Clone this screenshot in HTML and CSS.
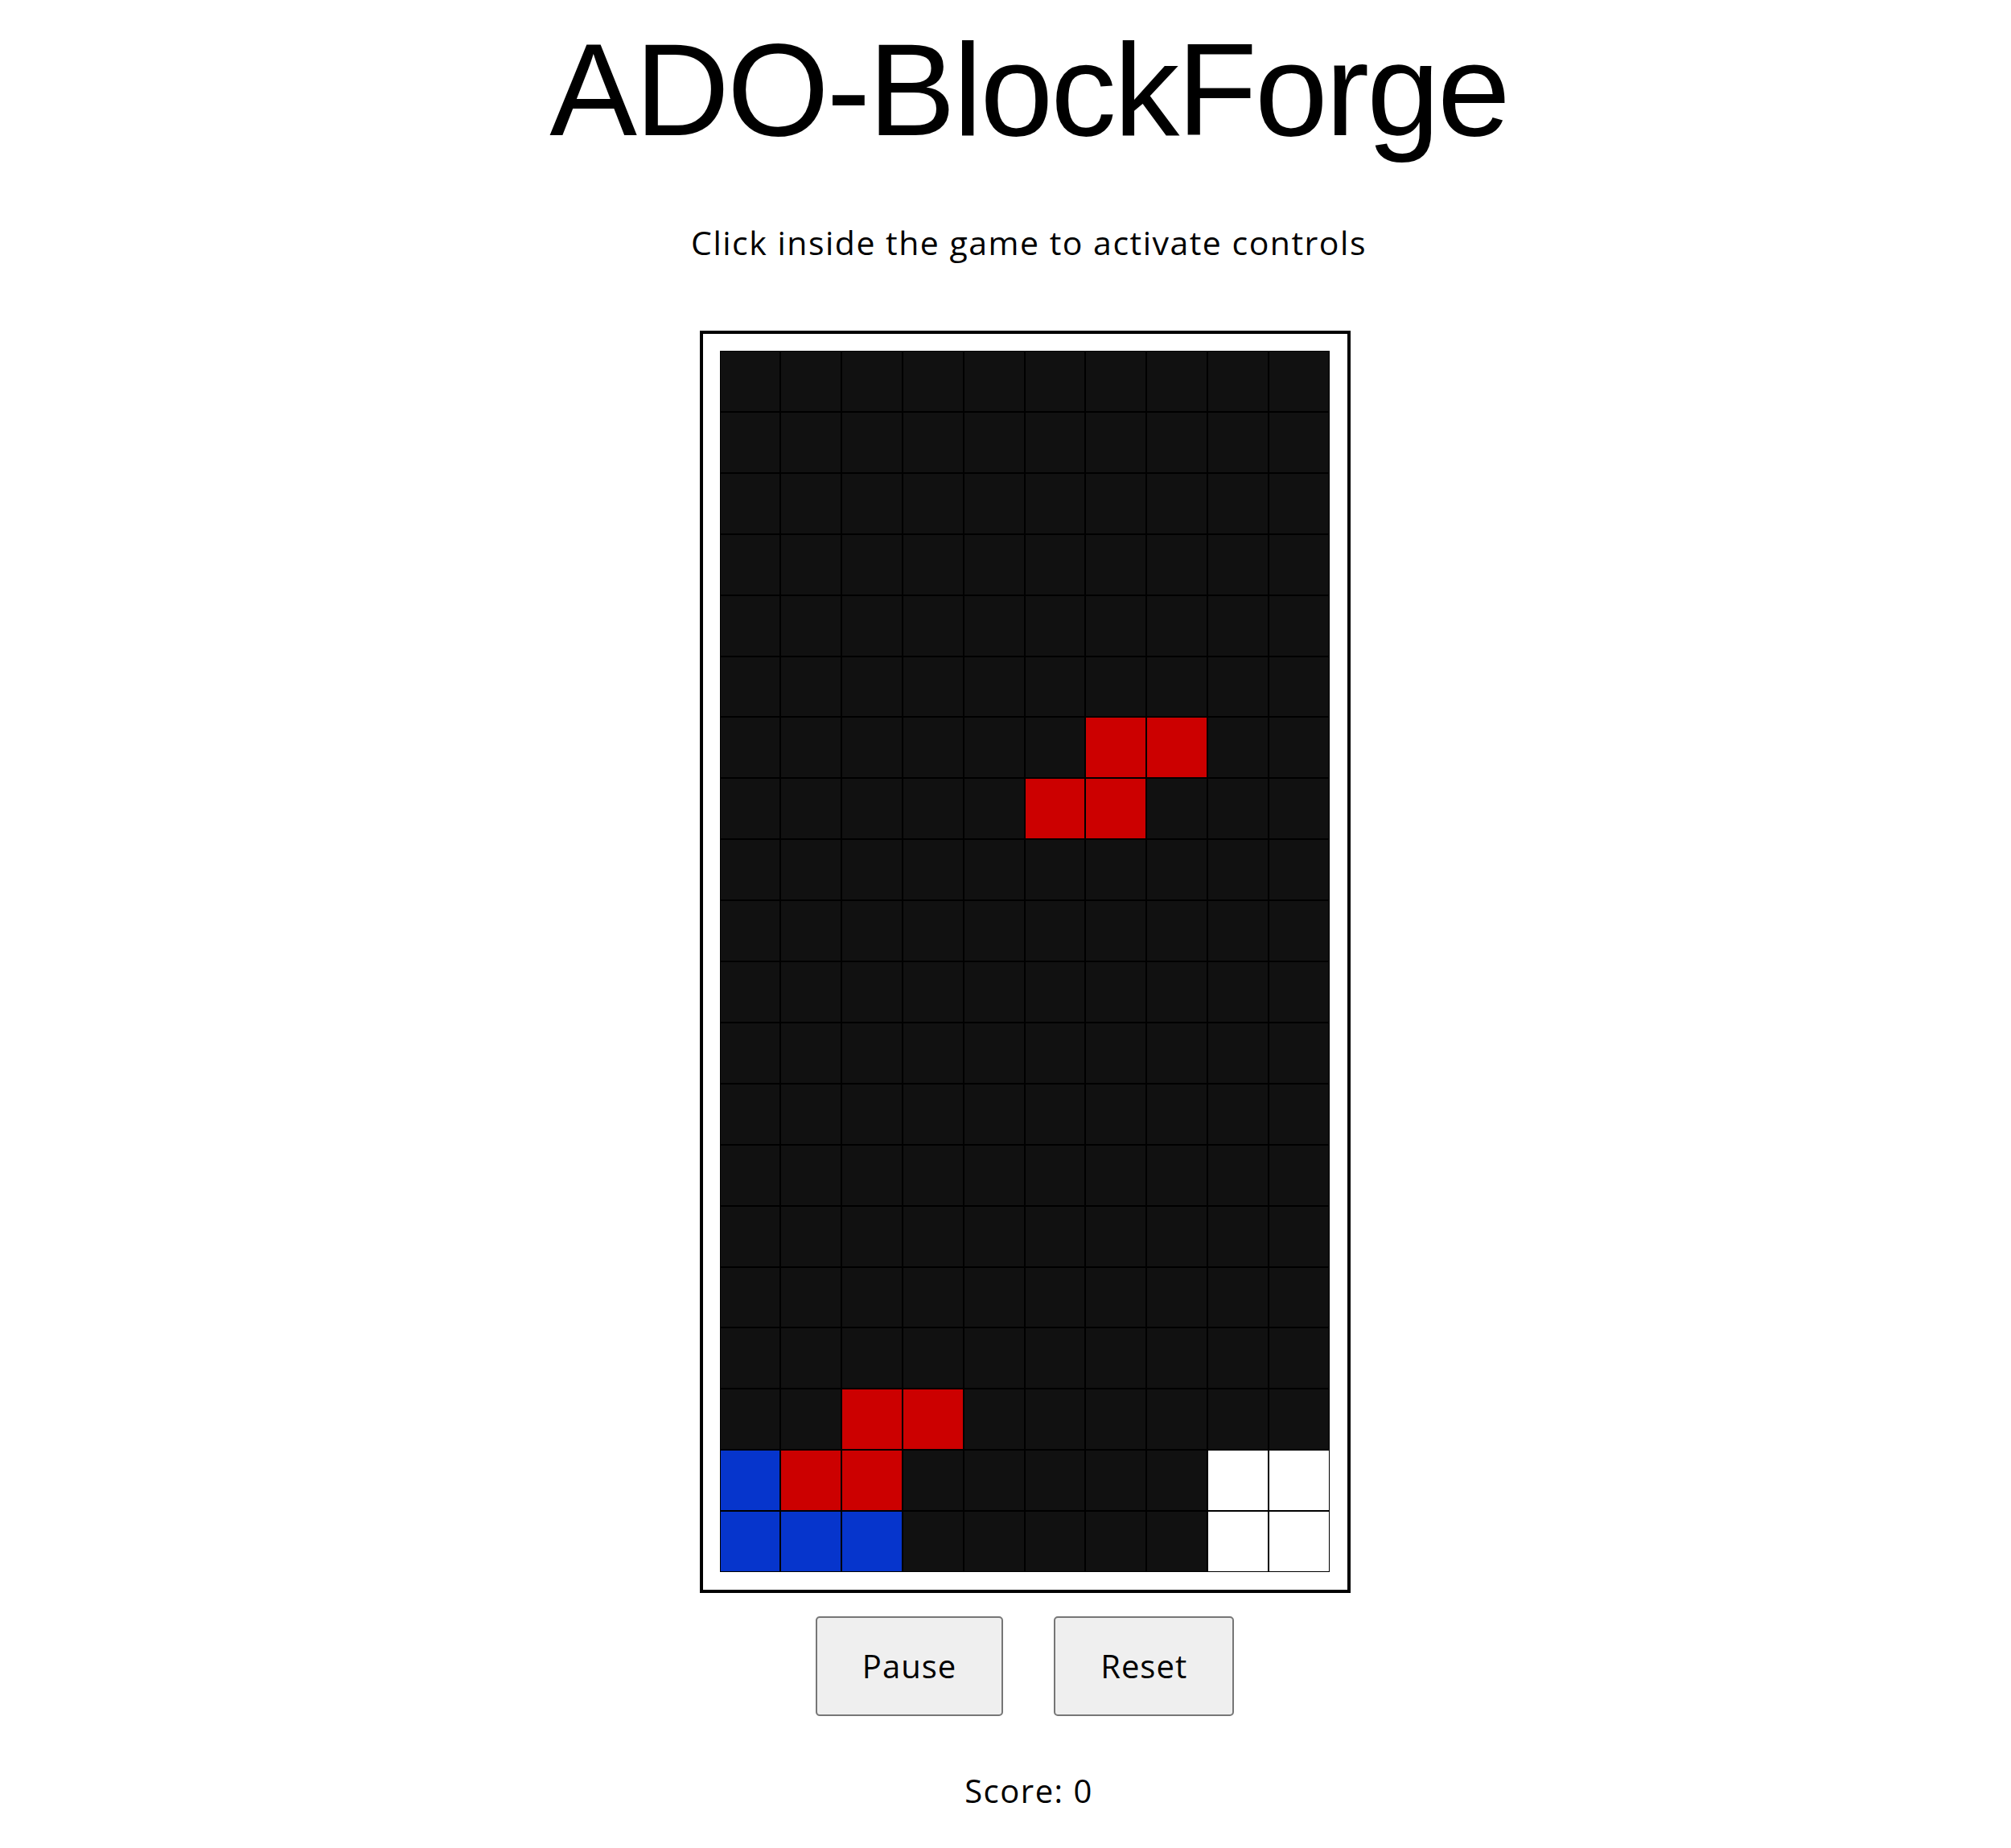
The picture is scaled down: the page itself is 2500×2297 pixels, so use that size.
FILE: index.html
```html
<!DOCTYPE html>
<html lang="en">
<head>
<meta charset="utf-8">
<title>ADO-BlockForge</title>
<link rel="stylesheet" href="styles.css">
</head>
<body>
<main class="page">
  <h1 class="title">ADO-BlockForge</h1>
  <p class="hint">Click inside the game to activate controls</p>
  <div class="board">
    <div class="grid">
      <div class="c"></div><div class="c"></div><div class="c"></div><div class="c"></div><div class="c"></div><div class="c"></div><div class="c"></div><div class="c"></div><div class="c"></div><div class="c"></div>
      <div class="c"></div><div class="c"></div><div class="c"></div><div class="c"></div><div class="c"></div><div class="c"></div><div class="c"></div><div class="c"></div><div class="c"></div><div class="c"></div>
      <div class="c"></div><div class="c"></div><div class="c"></div><div class="c"></div><div class="c"></div><div class="c"></div><div class="c"></div><div class="c"></div><div class="c"></div><div class="c"></div>
      <div class="c"></div><div class="c"></div><div class="c"></div><div class="c"></div><div class="c"></div><div class="c"></div><div class="c"></div><div class="c"></div><div class="c"></div><div class="c"></div>
      <div class="c"></div><div class="c"></div><div class="c"></div><div class="c"></div><div class="c"></div><div class="c"></div><div class="c"></div><div class="c"></div><div class="c"></div><div class="c"></div>
      <div class="c"></div><div class="c"></div><div class="c"></div><div class="c"></div><div class="c"></div><div class="c"></div><div class="c"></div><div class="c"></div><div class="c"></div><div class="c"></div>
      <div class="c"></div><div class="c"></div><div class="c"></div><div class="c"></div><div class="c"></div><div class="c"></div><div class="c red"></div><div class="c red"></div><div class="c"></div><div class="c"></div>
      <div class="c"></div><div class="c"></div><div class="c"></div><div class="c"></div><div class="c"></div><div class="c red"></div><div class="c red"></div><div class="c"></div><div class="c"></div><div class="c"></div>
      <div class="c"></div><div class="c"></div><div class="c"></div><div class="c"></div><div class="c"></div><div class="c"></div><div class="c"></div><div class="c"></div><div class="c"></div><div class="c"></div>
      <div class="c"></div><div class="c"></div><div class="c"></div><div class="c"></div><div class="c"></div><div class="c"></div><div class="c"></div><div class="c"></div><div class="c"></div><div class="c"></div>
      <div class="c"></div><div class="c"></div><div class="c"></div><div class="c"></div><div class="c"></div><div class="c"></div><div class="c"></div><div class="c"></div><div class="c"></div><div class="c"></div>
      <div class="c"></div><div class="c"></div><div class="c"></div><div class="c"></div><div class="c"></div><div class="c"></div><div class="c"></div><div class="c"></div><div class="c"></div><div class="c"></div>
      <div class="c"></div><div class="c"></div><div class="c"></div><div class="c"></div><div class="c"></div><div class="c"></div><div class="c"></div><div class="c"></div><div class="c"></div><div class="c"></div>
      <div class="c"></div><div class="c"></div><div class="c"></div><div class="c"></div><div class="c"></div><div class="c"></div><div class="c"></div><div class="c"></div><div class="c"></div><div class="c"></div>
      <div class="c"></div><div class="c"></div><div class="c"></div><div class="c"></div><div class="c"></div><div class="c"></div><div class="c"></div><div class="c"></div><div class="c"></div><div class="c"></div>
      <div class="c"></div><div class="c"></div><div class="c"></div><div class="c"></div><div class="c"></div><div class="c"></div><div class="c"></div><div class="c"></div><div class="c"></div><div class="c"></div>
      <div class="c"></div><div class="c"></div><div class="c"></div><div class="c"></div><div class="c"></div><div class="c"></div><div class="c"></div><div class="c"></div><div class="c"></div><div class="c"></div>
      <div class="c"></div><div class="c"></div><div class="c red"></div><div class="c red"></div><div class="c"></div><div class="c"></div><div class="c"></div><div class="c"></div><div class="c"></div><div class="c"></div>
      <div class="c blue"></div><div class="c red"></div><div class="c red"></div><div class="c"></div><div class="c"></div><div class="c"></div><div class="c"></div><div class="c"></div><div class="c white"></div><div class="c white"></div>
      <div class="c blue"></div><div class="c blue"></div><div class="c blue"></div><div class="c"></div><div class="c"></div><div class="c"></div><div class="c"></div><div class="c"></div><div class="c white"></div><div class="c white"></div>
    </div>
  </div>
  <div class="controls">
    <button class="btn" type="button">Pause</button>
    <button class="btn" type="button">Reset</button>
  </div>
  <p class="score">Score: 0</p>
</main>
</body>
</html>
```

FILE: styles.css
```css
html, body {
  margin: 0;
  padding: 0;
  background: #ffffff;
}

.page {
  display: flex;
  flex-direction: column;
  align-items: center;
  padding-left: 48px;
  color: #000;
  font-family: "Open Sans", "Liberation Sans", sans-serif;
}

.title {
  margin: 0;
  padding-top: 30px;
  font-family: "Liberation Sans", Arial, sans-serif;
  font-weight: 400;
  font-size: 163px;
  line-height: 163px;
  letter-spacing: -2.9px;
  padding-left: 10px;
}

.hint {
  margin: 84px 0 0;
  font-size: 41px;
  line-height: 48px;
  letter-spacing: 1.5px;
  padding-left: 10px;
}

.board {
  margin-top: 86px;
  border: 4px solid #000;
  padding: 21px 22px 22px 21px;
  background: #fff;
}

.grid {
  width: 758px;
  height: 1518px;
  display: grid;
  grid-template-columns: repeat(10, 1fr);
  grid-template-rows: repeat(20, 1fr);
  background: #000;
}

.c {
  box-sizing: border-box;
  border: 1.4px solid #000;
  background: #111111;
}

.c.red { background: #cc0000; }
.c.blue { background: #0635cc; }
.c.white { background: #ffffff; }

.controls {
  margin-top: 29px;
  display: flex;
  gap: 63px;
}

.btn {
  font-family: "Open Sans", "Liberation Sans", sans-serif;
  font-size: 40px;
  line-height: 50px;
  letter-spacing: 1px;
  padding: 35px 56px;
  color: #000;
  background: #efefef;
  border: 2px solid #767676;
  border-radius: 5px;
}

.score {
  margin: 69px 0 0;
  font-size: 40px;
  line-height: 48px;
  letter-spacing: 1.5px;
  padding-left: 10px;
}
```
